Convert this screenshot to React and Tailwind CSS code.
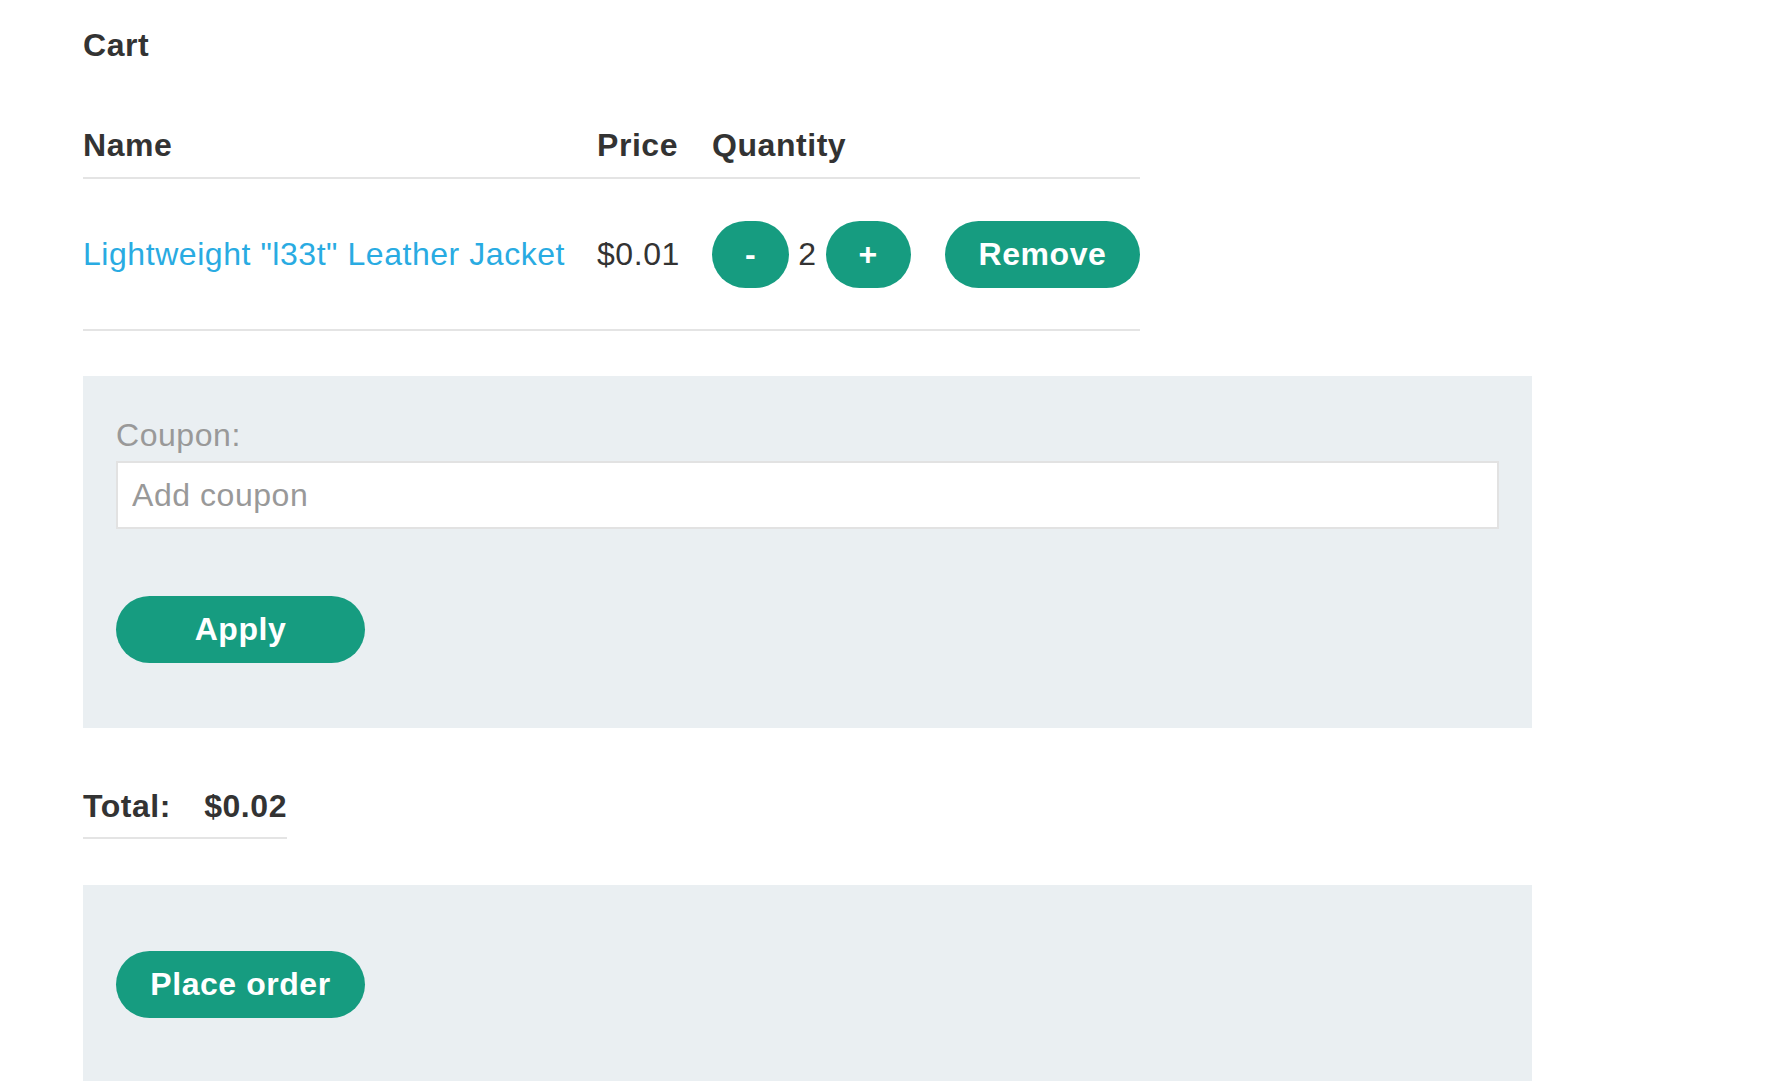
export default function App() {
  const btn =
    "inline-flex items-center justify-center h-[67px] rounded-full bg-[#169c80] text-white font-bold text-[32px] leading-[37px]";
  return (
    <div className="min-h-screen bg-white font-['Liberation_Sans',Arial,sans-serif] tracking-[0.55px] text-[#333] pl-[83px] pt-[27px]">
      <h1 className="text-[32px] font-bold leading-[37px]">Cart</h1>

      <div className="mt-[63px] w-[1057px]">
        <div className="flex border-b-2 border-[#e4e4e4] pb-[13px] text-[32px] font-bold leading-[37px]">
          <div className="w-[514px]">Name</div>
          <div className="w-[115px]">Price</div>
          <div className="w-[233px]">Quantity</div>
          <div className="w-[195px]"></div>
        </div>
        <div className="flex h-[152px] items-center border-b-2 border-[#e4e4e4] text-[32px] leading-[37px]">
          <div className="w-[514px]">
            <a href="#" className="text-[#29abe2] no-underline">
              Lightweight "l33t" Leather Jacket
            </a>
          </div>
          <div className="w-[115px]">$0.01</div>
          <div className="flex w-[233px] items-center">
            <button className={`${btn} px-[33px]`}>-</button>
            <span className="mx-[9px]">2</span>
            <button className={`${btn} px-[33px]`}>+</button>
          </div>
          <div className="w-[195px]">
            <button className={`${btn} w-[195px]`}>Remove</button>
          </div>
        </div>
      </div>

      <div className="mt-[45px] w-[1449px] bg-[#eaeff2] px-[33px] pt-[41px] pb-[65px]">
        <label className="block text-[32px] leading-[37px] text-[#999]">Coupon:</label>
        <input
          type="text"
          placeholder="Add coupon"
          className="mt-[7px] block h-[68px] w-full border-2 border-[#e2e2e2] bg-white px-[14px] text-[32px] leading-[37px] tracking-[0.55px] text-[#333] placeholder:text-[#999] outline-none"
        />
        <button className={`${btn} mt-[67px] w-[249px]`}>Apply</button>
      </div>

      <div className="mt-[60px] flex w-[204px] border-b-2 border-[#e4e4e4] pb-[12px] text-[32px] font-bold leading-[37px]">
        <div className="w-[122px]">Total:</div>
        <div>$0.02</div>
      </div>

      <div className="mt-[46px] w-[1449px] bg-[#eaeff2] px-[33px] pt-[66px] pb-[66px]">
        <button className={`${btn} w-[249px]`}>Place order</button>
      </div>
    </div>
  );
}
